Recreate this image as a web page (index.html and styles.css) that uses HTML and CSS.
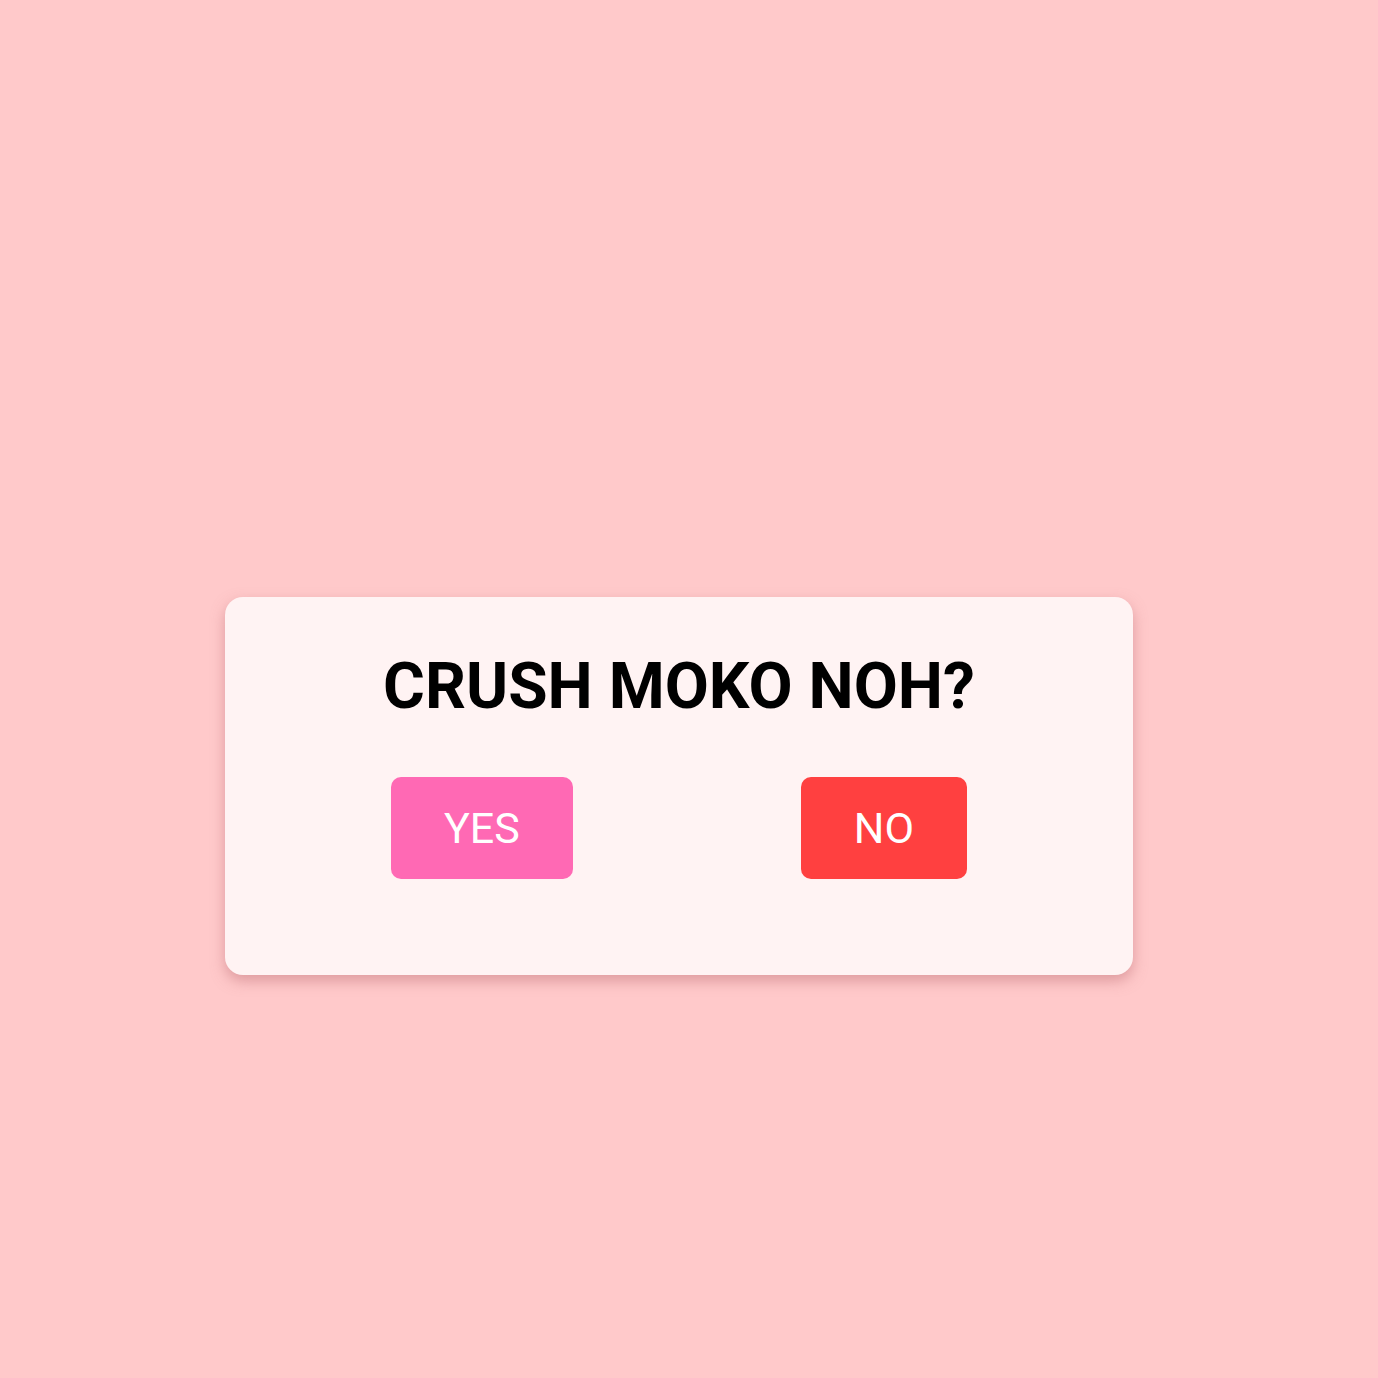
FILE: index.html
```html
<!DOCTYPE html>
<html>
<head>
<meta charset="utf-8">
<link rel="stylesheet" href="styles.css">
</head>
<body>
<main class="stage">
  <section class="card">
    <h1 class="title">CRUSH MOKO NOH?</h1>
    <div class="actions">
      <button class="btn btn-yes">YES</button>
      <button class="btn btn-no">NO</button>
    </div>
  </section>
</main>
</body>
</html>
```

FILE: styles.css
```css
html, body {
  margin: 0;
  padding: 0;
  background: #ffc9ca;
  font-family: Roboto, "Liberation Sans", sans-serif;
}
.stage {
  min-height: 1378px;
  padding: 597px 0 0 225px;
  box-sizing: border-box;
}
.card {
  width: 908px;
  height: 378px;
  box-sizing: border-box;
  background: #fff3f3;
  border-radius: 18px;
  box-shadow: 0 6px 14px rgba(190, 110, 115, 0.5);
  padding-top: 52px;
  display: flex;
  flex-direction: column;
}
.title {
  margin: 0;
  text-align: center;
  white-space: nowrap;
  font-weight: 700;
  font-size: 64px;
  line-height: 75px;
  color: #000;
}
.actions {
  margin-top: 53px;
  padding: 0 166px;
  display: flex;
  justify-content: space-between;
}
.btn {
  height: 102px;
  padding: 0 53px;
  border: none;
  border-radius: 10px;
  color: #fff;
  font-family: Roboto, "Liberation Sans", sans-serif;
  font-size: 43px;
  font-weight: 400;
}
.btn-yes { background: #ff69b4; }
.btn-no { background: #ff4040; }
```
